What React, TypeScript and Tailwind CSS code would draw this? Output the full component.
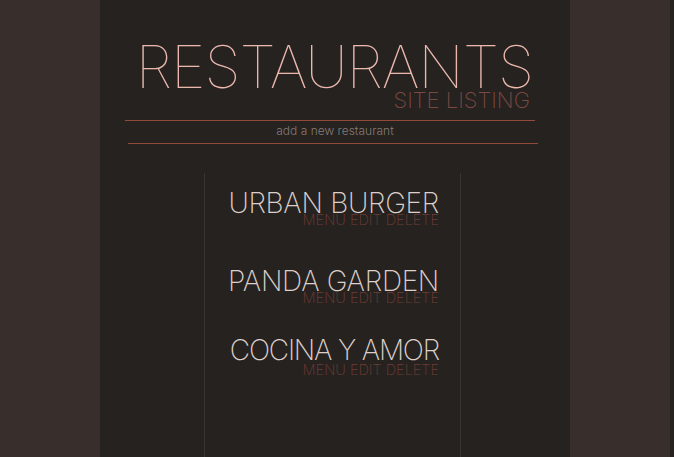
import React from "react";

const items = [
  { name: "URBAN BURGER", mt: "mt-[15px]", gap: "-mt-[6px]", track: "tracking-[-0.3px]" },
  { name: "PANDA GARDEN", mt: "mt-[38px]", gap: "-mt-[6px]", track: "tracking-[-0.3px]" },
  { name: "COCINA Y AMOR", mt: "mt-[29px]", gap: "-mt-[3px]", track: "tracking-[-1.2px]" },
];

export default function App() {
  const font = { fontFamily: "Inter, 'Noto Sans', sans-serif" };
  return (
    <div className="flex h-[457px] w-full overflow-hidden bg-[#382f2d]" style={font}>
      <div className="w-[100px] shrink-0" />
      <div className="flex w-[470px] shrink-0 flex-col bg-[#262220]">
        <div className="flex flex-col items-end pr-[37px] pt-[37px]">
          <div className="text-[59px] font-thin leading-[60px] tracking-[-1.1px] text-[#ecb8ae]">
            RESTAURANTS
          </div>
          <div className="-mt-[9px] mr-[3px] text-[22px] font-extralight leading-[24px] text-[#7c4844]">
            SITE LISTING
          </div>
        </div>
        <div className="ml-[25px] mt-[8px] h-0 w-[410px] border-t border-[#934a3b]" />
        <div className="mt-[3px] text-center text-[12px] font-light leading-[14px] text-[#857b79]">
          add a new restaurant
        </div>
        <div className="ml-[28px] mt-[5px] h-0 w-[410px] border-t border-[#934a3b]" />
        <div className="ml-[104px] mt-[29px] flex w-[257px] flex-1 flex-col items-end border-x border-[#3b3331] pr-[21px]">
          {items.map((it) => (
            <div key={it.name} className={`flex flex-col items-end ${it.mt}`}>
              <div className={`text-[28px] font-extralight leading-[30px] ${it.track} text-[#ddd0cc]`}>
                {it.name}
              </div>
              <div className={`${it.gap} text-[14.5px] font-extralight leading-[16px] text-[#6e3d35]`}>
                MENU EDIT DELETE
              </div>
            </div>
          ))}
        </div>
      </div>
      <div className="flex-1" />
      <div className="w-[4px] shrink-0 bg-[#262220]" />
    </div>
  );
}
